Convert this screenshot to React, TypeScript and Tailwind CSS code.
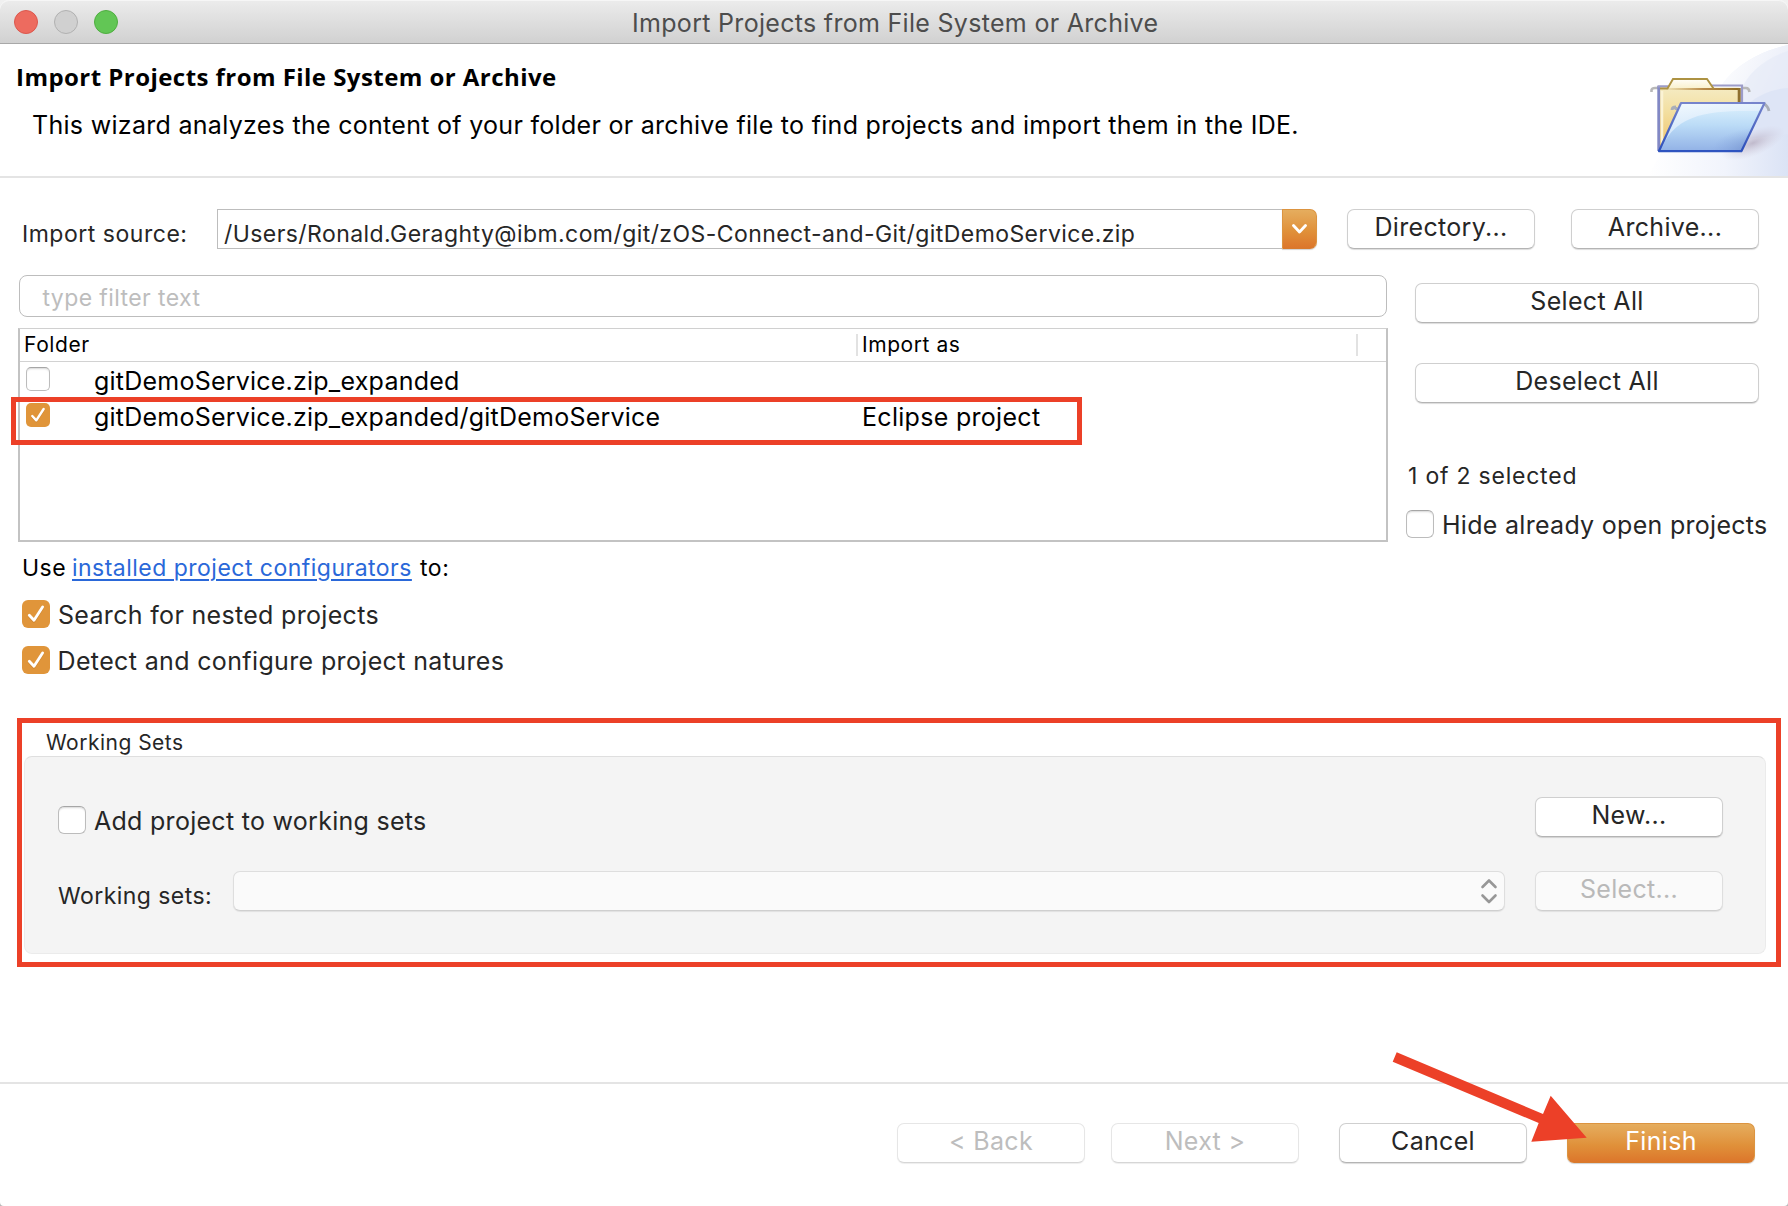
import type { ReactNode } from 'react'

function Checkbox({ checked, small }: { checked?: boolean; small?: boolean }) {
  const size = small ? 'size-6 rounded-[5px]' : 'size-7 rounded-[6px]'
  if (!checked) {
    return (
      <span
        className={`${size} block shrink-0 border border-[#bcbcbc] border-t-[#a6a6a6] bg-white shadow-[inset_0_2px_2px_-1px_rgba(0,0,0,0.16)]`}
      />
    )
  }
  return (
    <span className={`${size} block shrink-0 bg-[#e0953a]`}>
      <svg viewBox="0 0 28 28" className="size-full" fill="none" strokeLinecap="round" strokeLinejoin="round">
        <path d="M7.3 16.2 L12 21.2 L20.6 8" stroke="#b9721f" strokeOpacity="0.45" strokeWidth="2.8" />
        <path d="M7.3 15.2 L12 20.2 L20.6 7" stroke="#fff" strokeWidth="2.8" />
      </svg>
    </span>
  )
}

type ButtonProps = { children: ReactNode; className?: string; kind?: 'normal' | 'disabled' | 'inset' | 'primary' }

function Button({ children, className = 'w-[188px]', kind = 'normal' }: ButtonProps) {
  const look = {
    normal:
      'border border-[#cfcfcf] border-b-[#b4b4b4] bg-white text-[#262626] shadow-[0_1px_1px_rgba(0,0,0,0.14)]',
    disabled: 'border border-[#e6e6e6] border-b-[#d6d6d6] bg-white text-[#bdbdbd] shadow-[0_1px_1px_rgba(0,0,0,0.07)]',
    inset: 'border border-[#dedede] border-b-[#cfcfcf] bg-[#fafafa] text-[#b9b9b9] shadow-[0_1px_1px_rgba(0,0,0,0.08)]',
    primary:
      'border border-[#dc9440] border-b-[#d87a2c] bg-linear-to-b from-[#e5ad5e] via-[#e0913a] via-55% to-[#dc762b] text-white shadow-[0_1px_1px_rgba(0,0,0,0.18)]',
  }[kind]
  return (
    <button
      className={`${className} ${look} flex h-10 shrink-0 justify-center rounded-[7px] pt-[2px] text-[25px] leading-[30px] tracking-[0.32px] whitespace-nowrap`}
    >
      {children}
    </button>
  )
}

function FolderArt() {
  return (
    <svg className="h-[132px] w-[200px] shrink-0" viewBox="0 0 200 132">
      <defs>
        <linearGradient id="glow" x1="0" x2="1" y1="0" y2="0">
          <stop offset="0" stopColor="#fff" />
          <stop offset="0.55" stopColor="#f1f4fc" />
          <stop offset="1" stopColor="#dbe3f5" />
        </linearGradient>
        <linearGradient id="sweep" x1="0.4" x2="1" y1="0" y2="0.4">
          <stop offset="0" stopColor="#f9fafd" />
          <stop offset="1" stopColor="#e8ecf8" />
        </linearGradient>
        <linearGradient id="paper" x1="0" x2="0" y1="0" y2="1">
          <stop offset="0" stopColor="#f5efcf" />
          <stop offset="0.45" stopColor="#f3dfa0" />
          <stop offset="1" stopColor="#efbf62" />
        </linearGradient>
        <linearGradient id="tab" x1="0" x2="0" y1="0" y2="1">
          <stop offset="0" stopColor="#fffef8" />
          <stop offset="1" stopColor="#faf1cf" />
        </linearGradient>
        <linearGradient id="fold" gradientUnits="userSpaceOnUse" x1="78" x2="152" y1="45" y2="45">
          <stop offset="0" stopColor="#c19a4c" stopOpacity="0.1" />
          <stop offset="0.5" stopColor="#b98b4a" />
          <stop offset="1" stopColor="#8d6a20" />
        </linearGradient>
        <linearGradient id="front" x1="0" x2="0" y1="0" y2="1">
          <stop offset="0" stopColor="#dff2fd" />
          <stop offset="0.45" stopColor="#bcdcf7" />
          <stop offset="1" stopColor="#92b2e6" />
        </linearGradient>
        <linearGradient id="shine" x1="0" x2="0.4" y1="0" y2="1">
          <stop offset="0" stopColor="#f6fbff" />
          <stop offset="1" stopColor="#c9e0f8" />
        </linearGradient>
        <linearGradient id="edge" x1="0" x2="0" y1="0" y2="1">
          <stop offset="0" stopColor="#7684cc" />
          <stop offset="1" stopColor="#2c4fbb" />
        </linearGradient>
        <radialGradient id="shadow">
          <stop offset="0" stopColor="#b3a9bd" stopOpacity="0.75" />
          <stop offset="1" stopColor="#cfc9da" stopOpacity="0" />
        </radialGradient>
        <radialGradient id="corner" cx="1" cy="1" r="0.5">
          <stop offset="0" stopColor="#5471b4" stopOpacity="0.75" />
          <stop offset="1" stopColor="#7b9ada" stopOpacity="0" />
        </radialGradient>
      </defs>
      <path d="M200 1 C165 9 143 26 132 44 C105 85 80 110 60 132 L200 132 Z" fill="url(#glow)" opacity="0.75" />
      <path d="M200 1 C165 9 143 26 132 44 L126 90 L200 110 Z" fill="url(#sweep)" />
      <path d="M200 7 C178 14 160 28 152 48 L150 100 L200 110 Z" fill="#e5eaf7" opacity="0.6" />
      <path d="M200 44 C185 45 172 50 160 60 L130 132 L200 132 Z" fill="#dbe3f5" opacity="0.75" />
      <path d="M60 132 L75 105 L160 95 L200 90 L200 132 Z" fill="url(#glow)" />
      <ellipse cx="165" cy="99" rx="34" ry="13" fill="url(#shadow)" transform="rotate(-22 165 99)" />
      <path d="M63.500 48 V46 Q64 44 67 44 H71 M155 44 H158 Q161 44 161.500 48" stroke="#b8b8b8" strokeWidth="2.600" fill="none" />
      <path d="M71 108 V43.500 H79 L84.500 35 H119 L125 43.500 H151.500 V62" fill="url(#paper)" />
      <path d="M74 47 V100" stroke="#fbf3d4" strokeWidth="2.500" />
      <path d="M70.700 42 V107" stroke="#8288c4" strokeWidth="2.800" />
      <path d="M69.500 42.300 H80 M124 41.500 H154 V60" stroke="#9c9cc8" strokeWidth="2.200" fill="none" />
      <path d="M79.500 44 L85 35 H119 L125.500 44 Z" fill="url(#tab)" />
      <path d="M78 45 L152 45.100" stroke="url(#fold)" strokeWidth="2" />
      <path d="M72 44.500 H79.500 L85 35 H119 L125.500 44.500" stroke="#ad9242" strokeWidth="1.900" fill="none" />
      <path d="M151.200 44 V60" stroke="#8f7030" strokeWidth="3" />
      <path d="M84 66 Q84 63 88 63 M88 63 V66 M176 60 Q180 62 181 67" stroke="#a9aeb8" strokeWidth="2.800" fill="none" />
      <path d="M93 59 H176.500 L153.500 107 H71 Z" fill="url(#front)" />
      <path d="M94 60 H175 L171 67 C130 67 88 66 73.500 105 Z" fill="url(#shine)" opacity="0.85" />
      <path d="M93 59 H176.500 L153.500 107 H71 Z" fill="url(#corner)" />
      <path d="M93 59 H176.500 L153.500 107 H71 Z" fill="none" stroke="url(#edge)" strokeWidth="2.200" strokeLinejoin="round" />
      <path d="M70.500 107.200 H154" stroke="#2f55c0" strokeWidth="2" />
    </svg>
  )
}

function TitleBar() {
  return (
    <div className="relative flex h-11 items-start rounded-t-[9px] border-b border-[#a8a8a8] bg-linear-to-b from-[#ececec] to-[#d1d1d1] pt-[8px] shadow-[inset_0_1px_0_#f6f6f6]">
      <div className="flex gap-4 pt-[2px] pl-[14px]">
        <span className="size-6 rounded-full border border-[#dc574d] bg-[#ed6b5f]" />
        <span className="size-6 rounded-full border border-[#b1b1b1] bg-[#d0d0d0]" />
        <span className="size-6 rounded-full border border-[#4fae40] bg-[#62c655]" />
      </div>
      <div className="pl-[514px] text-[25px] leading-[30px] tracking-[0.305px] text-[#4d4d4d]">
        Import Projects from File System or Archive
      </div>
    </div>
  )
}

function Header() {
  return (
    <div className="flex h-[134px] justify-between border-b-2 border-[#e4e4e4]">
      <div className="pt-[18px] whitespace-nowrap text-black">
        <h1 className="pl-[16px] font-['Open_Sans','Noto_Sans',sans-serif] text-[24px] leading-[30px] font-bold tracking-[0.45px]">
          Import Projects from File System or Archive
        </h1>
        <p className="mt-[18px] pl-[32px] text-[25px] leading-[30px] tracking-[0.295px]">
          This wizard analyzes the content of your folder or archive file to find projects and import them in the IDE.
        </p>
      </div>
      <FolderArt />
    </div>
  )
}

function SourceRow() {
  return (
    <div className="mt-[31px] flex h-10 items-start">
      <div className="w-[217px] pt-[10px] pl-[22px] text-[23px] leading-[30px] tracking-[0.52px] whitespace-nowrap text-[#262626]">
        Import source:
      </div>
      <div className="flex h-10 w-[1100px]">
        <div className="flex-1 border border-r-0 border-[#bdbdbd] pt-[9px] pl-[6px] text-[23px] leading-[30px] tracking-[0.43px] whitespace-nowrap text-[#262626]">
          /Users/Ronald.Geraghty@ibm.com/git/zOS-Connect-and-Git/gitDemoService.zip
        </div>
        <div className="flex w-[35px] items-center justify-center rounded-r-[7px] border border-[#dc9440] border-b-[#d87a2c] bg-linear-to-b from-[#e5ad5e] via-[#e0913a] via-55% to-[#dc762b] shadow-[0_1px_1px_rgba(0,0,0,0.18)]">
          <svg viewBox="0 0 16 10" className="h-[10px] w-4" fill="none">
            <path d="M1.500 1.500 L7.500 8 L13.500 1.500" stroke="#fff" strokeWidth="2.800" strokeLinecap="round" strokeLinejoin="round" />
          </svg>
        </div>
      </div>
      <div className="flex gap-9 pl-[30px]">
        <Button>Directory...</Button>
        <Button>Archive...</Button>
      </div>
    </div>
  )
}

const folders = [
  { name: 'gitDemoService.zip_expanded', importAs: '', checked: false },
  { name: 'gitDemoService.zip_expanded/gitDemoService', importAs: 'Eclipse project', checked: true },
]

function FolderTable() {
  return (
    <div className="relative mt-[11px] -ml-px h-[214px] w-[1370px] border-2 border-t border-[#c3c3c3] border-t-[#d0d0d0]">
      <div className="flex h-[33px] border-b border-[#d2d2d2] text-[21px] leading-[32px] tracking-[0.57px] text-black">
        <div className="w-[836px] pl-[4px]">Folder</div>
        <div className="my-[5px] w-[2px] bg-[#e2e2e2]" />
        <div className="w-[498px] pl-[4px]">Import as</div>
        <div className="my-[5px] w-[2px] bg-[#e2e2e2]" />
      </div>
      <div className="flex flex-col gap-[6px] pt-[4px]">
        {folders.map((f) => (
          <div key={f.name} className="flex h-[30px] items-start pl-[6px] text-[25px] leading-[30px] text-black">
            <div className="w-[68px] pt-[1px]">
              <Checkbox small checked={f.checked} />
            </div>
            <div className="w-[768px] tracking-[0.225px]">{f.name}</div>
            <div className="tracking-[0.3px]">{f.importAs}</div>
          </div>
        ))}
      </div>
      <div className="absolute top-[68px] -left-[9px] h-[48px] w-[1071px] border-[5px] border-[#ec4028]" />
    </div>
  )
}

function SelectionPanel() {
  return (
    <div className="flex flex-col pt-2 text-[#262626]">
      <div className="flex flex-col gap-10 pl-[9px]">
        <Button className="w-[344px]">Select All</Button>
        <Button className="w-[344px]">Deselect All</Button>
      </div>
      <div className="mt-[58px] pl-[2px] text-[23px] leading-[30px] tracking-[0.78px]">1 of 2 selected</div>
      <div className="mt-[19px] flex text-[25px] leading-[30px] tracking-[0.29px] whitespace-nowrap">
        <Checkbox />
        <span className="pl-[8px]">Hide already open projects</span>
      </div>
    </div>
  )
}

function Configurators() {
  return (
    <div className="mt-[11px] text-[#262626]">
      <div className="flex pl-[22px] text-[23px] leading-[30px] whitespace-pre text-black">
        <span className="w-[50px] tracking-[0.5px]">Use</span>
        <a className="mr-[8px] tracking-[0.48px] text-[#2a68d9] underline decoration-2 underline-offset-[3px]">
          installed project configurators
        </a>
        <span className="tracking-[0.7px]">to:</span>
      </div>
      <div className="mt-[17px] flex flex-col gap-4 pl-[22px] text-[25px] leading-[30px]">
        <div className="flex h-[30px] items-start tracking-[0.32px]">
          <Checkbox checked />
          <span className="pl-[8px]">Search for nested projects</span>
        </div>
        <div className="flex h-[30px] items-start tracking-[0.36px]">
          <Checkbox checked />
          <span className="pl-[7.500px]">Detect and configure project natures</span>
        </div>
      </div>
    </div>
  )
}

function WorkingSets() {
  return (
    <div className="mt-[42px] mr-[7px] ml-[17px] h-[249px] border-[5px] border-[#ec4028] pt-[4px] pr-[10px] pl-[2px] text-[#262626]">
      <div className="h-[29px] pl-[22px] text-[21px] leading-[32px] tracking-[0.488px]">Working Sets</div>
      <div className="h-[198px] rounded-[8px] border border-[#ebebeb] border-t-[#dfdfdf] bg-[#f4f4f4] pt-10 pr-[42px] pl-[33px]">
        <div className="flex h-10 items-start justify-between">
          <div className="flex items-start pt-[9px] text-[25px] leading-[30px] tracking-[0.281px]">
            <Checkbox />
            <span className="pl-[8px]">Add project to working sets</span>
          </div>
          <Button>New...</Button>
        </div>
        <div className="mt-[34px] flex h-10 items-start">
          <div className="w-[175px] pt-[10px] text-[23px] leading-[30px] tracking-[0.446px]">Working sets:</div>
          <div className="mr-[30px] flex h-10 flex-1 items-center justify-end rounded-[7px] border border-[#dedede] border-b-[#cfcfcf] bg-[#fafafa] pr-[6px] shadow-[0_1px_1px_rgba(0,0,0,0.08)]">
            <svg viewBox="0 0 18 26" className="h-[26px] w-[18px]" fill="none" stroke="#979797" strokeWidth="2.600" strokeLinecap="round" strokeLinejoin="round">
              <path d="M2.500 9 L9 2.500 L15.500 9 M2.500 17.500 L9 24 L15.500 17.500" />
            </svg>
          </div>
          <Button kind="inset">Select...</Button>
        </div>
      </div>
    </div>
  )
}

function Footer() {
  return (
    <div className="mt-[115px] flex border-t-2 border-[#e4e4e4] pt-[39px] pl-[897px]">
      <Button kind="disabled">&lt; Back</Button>
      <div className="w-[26px]" />
      <Button kind="disabled">Next &gt;</Button>
      <div className="w-10" />
      <Button>Cancel</Button>
      <div className="w-10" />
      <Button kind="primary">Finish</Button>
    </div>
  )
}

export default function App() {
  return (
    <div className="h-[1206px] w-[1788px] overflow-hidden bg-linear-to-b from-[#f0f0f0] to-[#b8b8b8]">
      <div className="relative h-full w-full overflow-hidden rounded-t-[9px] rounded-b-[4px] bg-white font-['Inter','Liberation_Sans',sans-serif]">
        <TitleBar />
        <Header />
        <SourceRow />
        <div className="mt-[26px] flex h-[267px] pl-[19px]">
          <div className="w-[1387px]">
            <div className="h-[42px] w-[1368px] rounded-[8px] border border-[#bdbdbd] pt-[7px] pl-[22.500px] text-[23px] leading-[30px] tracking-[0.4px] text-[#bdbdbd]">
              type filter text
            </div>
            <FolderTable />
          </div>
          <SelectionPanel />
        </div>
        <Configurators />
        <WorkingSets />
        <Footer />
        <svg className="absolute top-[1048px] left-[1388px] h-[100px] w-[204px]" viewBox="1388 1048 204 100">
          <path
            d="M1396.700 1052.300 L1543 1114 L1550.700 1095.700 L1586.700 1137.700 L1531.300 1141.700 L1538.700 1123 L1392.700 1061.700 Z"
            fill="#ec4028"
          />
        </svg>
      </div>
    </div>
  )
}
